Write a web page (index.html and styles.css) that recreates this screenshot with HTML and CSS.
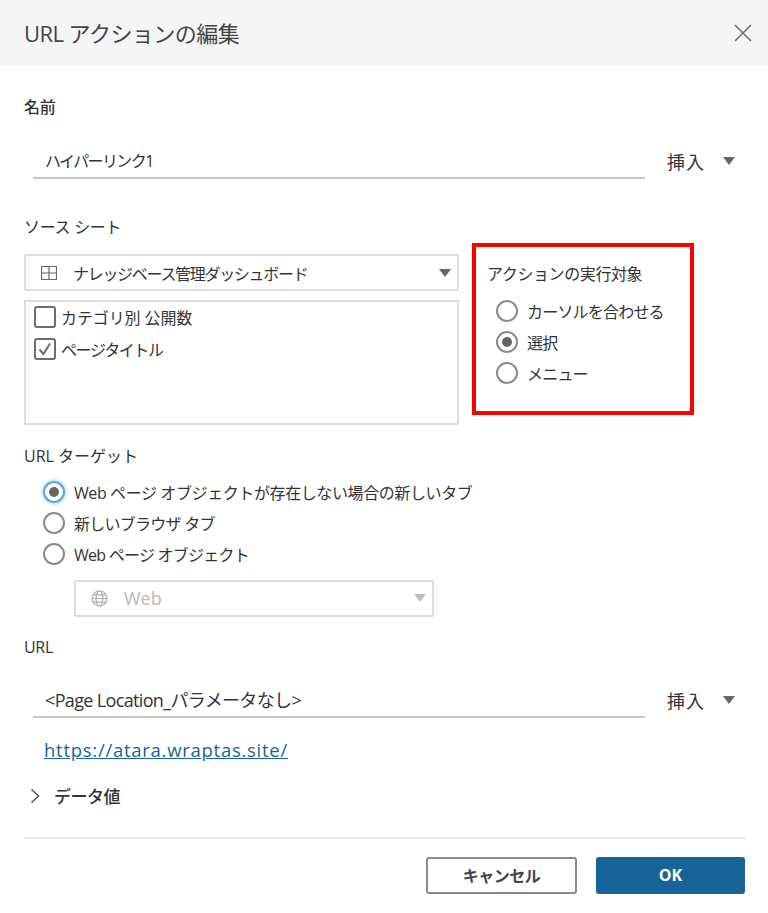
FILE: index.html
```html
<!DOCTYPE html>
<html lang="ja">
<head>
  <meta charset="UTF-8">
  <meta name="viewport" content="width=device-width, initial-scale=1.0">
  <title>URL アクションの編集</title>
  <link rel="stylesheet" href="styles.css">
</head>
<body>
  <div class="dialog">
    <header class="dialog-header">
      <h1>URL アクションの編集</h1>
      <svg class="close-icon" width="20" height="20" viewBox="0 0 20 20"><path d="M2 2 L18 18 M18 2 L2 18"/></svg>
    </header>

    <main class="dialog-body">
      <div class="label label-name">名前</div>
      <div class="input-row">
        <div class="text-input input-name">ハイパーリンク1</div>
        <div class="insert">挿入<span class="arrow"></span></div>
      </div>

      <div class="label label-source">ソース シート</div>
      <div class="source-grid">
        <div class="source-left">
          <div class="select select-source">
            <svg class="select-icon" width="16" height="16" viewBox="0 0 16 16"><path d="M0.5 1.5 H15.5 V14.5 H0.5 Z M8 1.5 V14.5 M0.5 8 H15.5"/></svg>
            <span>ナレッジベース管理ダッシュボード</span>
            <span class="arrow arrow-select"></span>
          </div>
          <div class="listbox">
            <div class="check-row"><span class="checkbox"></span>カテゴリ別 公開数</div>
            <div class="check-row check-row-tight">
              <span class="checkbox">
                <svg width="22" height="22" viewBox="0 0 22 22"><path d="M5.5 11.5 L9.5 16 L16 5.5"/></svg>
              </span>ページタイトル
            </div>
          </div>
        </div>
        <div class="run-box">
          <div class="run-title">アクションの実行対象</div>
          <div class="radio-row"><span class="radio"></span>カーソルを合わせる</div>
          <div class="radio-row"><span class="radio checked"></span>選択</div>
          <div class="radio-row"><span class="radio"></span>メニュー</div>
        </div>
      </div>

      <div class="label label-target">URL ターゲット</div>
      <div class="target-list">
        <div class="radio-row"><span class="radio checked focused"></span>Web ページ オブジェクトが存在しない場合の新しいタブ</div>
        <div class="radio-row radio-row-tight"><span class="radio"></span>新しいブラウザ タブ</div>
        <div class="radio-row radio-row-tight"><span class="radio"></span>Web ページ オブジェクト</div>
      </div>
      <div class="select select-disabled">
        <svg class="select-icon" width="17" height="17" viewBox="0 0 17 17"><circle cx="8.5" cy="8.5" r="7.5"/><ellipse cx="8.5" cy="8.5" rx="3.4" ry="7.5"/><path d="M1 8.5 H16 M2.2 4.8 H14.8 M2.2 12.2 H14.8"/></svg>
        <span>Web</span>
        <span class="arrow arrow-select"></span>
      </div>

      <div class="label label-url">URL</div>
      <div class="input-row input-row-url">
        <div class="text-input input-url">&lt;Page Location_パラメータなし&gt;</div>
        <div class="insert">挿入<span class="arrow"></span></div>
      </div>
      <a class="url-link" href="#">https://atara.wraptas.site/</a>

      <div class="data-values">
        <svg width="10" height="16" viewBox="0 0 10 16"><path d="M1.5 1.5 L8.5 8 L1.5 14.5"/></svg>
        <span>データ値</span>
      </div>

      <footer class="dialog-footer">
        <button class="btn btn-cancel">キャンセル</button>
        <button class="btn btn-ok">OK</button>
      </footer>
    </main>
  </div>
</body>
</html>
```

FILE: styles.css
```css
:root {
  --text: #333333;
  --primary: #17649b;
}

html, body {
  margin: 0;
  padding: 0;
}

body {
  background-color: #ffffff;
  color: var(--text);
  font-family: "Open Sans", "Noto Sans CJK JP", sans-serif;
  font-size: 16px;
}

.dialog {
  width: 768px;
  height: 913px;
  overflow: hidden;
}

.dialog-header {
  height: 66px;
  box-sizing: border-box;
  padding: 0 15px 0 24px;
  background-color: #f5f5f5;
  display: flex;
  align-items: center;
  justify-content: space-between;
}

.dialog-header h1 {
  margin: 0 0 3px;
  font-size: 22px;
  font-weight: 400;
  letter-spacing: -0.55px;
  color: #444444;
}

.close-icon path {
  fill: none;
  stroke: #6e6e6e;
  stroke-width: 1.6;
}

.dialog-body {
  padding: 29px 23px 0 24px;
}

.label {
  height: 24px;
  line-height: 24px;
  font-size: 16px;
  letter-spacing: -0.3px;
}

.label-name {
  font-weight: 500;
}

.input-row {
  display: flex;
  align-items: center;
  margin-top: 26px;
  height: 34px;
}

.text-input {
  width: 612px;
  height: 34px;
  line-height: 33px;
  box-sizing: border-box;
  margin-left: 9px;
  padding-left: 12px;
  border-bottom: 2px solid #c8c8c8;
  font-size: 16px;
}

.input-name {
  letter-spacing: -1.6px;
}

.input-url {
  font-size: 18px;
  letter-spacing: -0.65px;
}

.insert {
  display: flex;
  align-items: center;
  margin-left: 22px;
  margin-top: -2px;
  font-size: 18px;
  letter-spacing: 1px;
}

.arrow {
  display: inline-block;
  width: 0;
  height: 0;
  margin-left: 18px;
  border-left: 6.5px solid transparent;
  border-right: 6.5px solid transparent;
  border-top: 8px solid #666666;
}

.label-source {
  margin-top: 36px;
}

.source-grid {
  display: grid;
  grid-template-columns: 435px 222px;
  column-gap: 13px;
  margin-top: 4px;
}

.source-left {
  padding-top: 11px;
  display: flex;
  flex-direction: column;
  gap: 9px;
}

.select {
  height: 37px;
  box-sizing: border-box;
  border: 2px solid #dcdcdc;
  border-radius: 2px;
  display: flex;
  align-items: center;
  padding: 0 6px 0 15px;
  font-size: 16px;
}

.select-source {
  letter-spacing: -1.3px;
}

.select-icon {
  margin-right: 16px;
  flex-shrink: 0;
}

.select-icon path,
.select-icon circle,
.select-icon ellipse {
  fill: none;
  stroke: #666666;
  stroke-width: 1.2;
}

.arrow-select {
  margin-left: auto;
}

.listbox {
  height: 125px;
  box-sizing: border-box;
  border: 2px solid #dcdcdc;
  padding: 0 0 0 8px;
}

.check-row {
  display: flex;
  align-items: center;
  height: 30px;
  font-size: 16px;
  letter-spacing: -0.1px;
}

.check-row-tight {
  height: 33px;
  letter-spacing: -1.4px;
}

.checkbox {
  width: 22px;
  height: 22px;
  box-sizing: border-box;
  margin-right: 5px;
  border: 2px solid #6e6e6e;
  border-radius: 3px;
  flex-shrink: 0;
  position: relative;
}

.checkbox svg {
  position: absolute;
  left: -2px;
  top: -2px;
}

.checkbox path {
  fill: none;
  stroke: #6e6e6e;
  stroke-width: 2;
}

.run-box {
  height: 172px;
  box-sizing: border-box;
  border: 4px solid #ff0000;
  padding: 15px 0 0 11px;
}

.run-title {
  height: 24px;
  line-height: 24px;
  letter-spacing: -0.4px;
}

.run-box .radio-row {
  margin-left: 9px;
  letter-spacing: -0.8px;
}

.run-box .radio-row:nth-child(2) {
  margin-top: 9px;
}

.radio-row {
  display: flex;
  align-items: center;
  height: 31.3px;
  font-size: 16px;
  letter-spacing: -0.4px;
}

.radio-row-tight {
  letter-spacing: -0.75px;
}

.radio {
  width: 22px;
  height: 22px;
  box-sizing: border-box;
  margin-right: 9px;
  border: 2px solid #8a8a8a;
  border-radius: 50%;
  flex-shrink: 0;
  display: flex;
  align-items: center;
  justify-content: center;
}

.radio.checked::after {
  content: "";
  width: 10px;
  height: 10px;
  border-radius: 50%;
  background-color: #666666;
}

.radio.focused {
  border-color: #5aa7de;
  box-shadow: 0 0 4px #7cc0ee;
}

.label-target {
  margin-top: 19px;
  letter-spacing: 0;
}

.target-list {
  margin-top: 8px;
  padding-left: 19px;
}

.select-disabled {
  width: 360px;
  margin: 10px 0 0 50px;
  color: #b9b9b9;
  font-size: 18px;
}

.select-disabled .select-icon path,
.select-disabled .select-icon circle,
.select-disabled .select-icon ellipse {
  stroke: #b0b0b0;
}

.select-disabled .arrow {
  border-top-color: #bcbcbc;
}

.label-url {
  margin-top: 18px;
}

.input-row-url {
  margin-top: 25px;
}

.url-link {
  display: block;
  margin: 20px 0 0 20px;
  width: max-content;
  height: 24px;
  line-height: 24px;
  color: #17649b;
  font-size: 18.5px;
  letter-spacing: 0.73px;
}

.data-values {
  display: flex;
  align-items: center;
  gap: 14px;
  height: 24px;
  margin-top: 22px;
  padding-left: 6px;
  font-size: 17px;
  font-weight: 500;
  letter-spacing: -0.5px;
}

.data-values path {
  fill: none;
  stroke: #555555;
  stroke-width: 1.5;
}

.dialog-footer {
  margin-top: 29px;
  border-top: 2px solid #e6e6e6;
  padding-top: 18px;
  display: flex;
  justify-content: flex-end;
  gap: 19px;
}

.btn {
  height: 37px;
  box-sizing: border-box;
  border-radius: 3px;
  font-family: inherit;
  font-size: 16px;
  font-weight: 600;
  padding: 0;
}

.btn-cancel {
  width: 151px;
  background-color: #ffffff;
  border: 2px solid #8a8a8a;
  color: #444444;
  letter-spacing: -0.5px;
}

.btn-ok {
  width: 149px;
  background-color: var(--primary);
  border: none;
  color: #ffffff;
  font-weight: 700;
}
```
